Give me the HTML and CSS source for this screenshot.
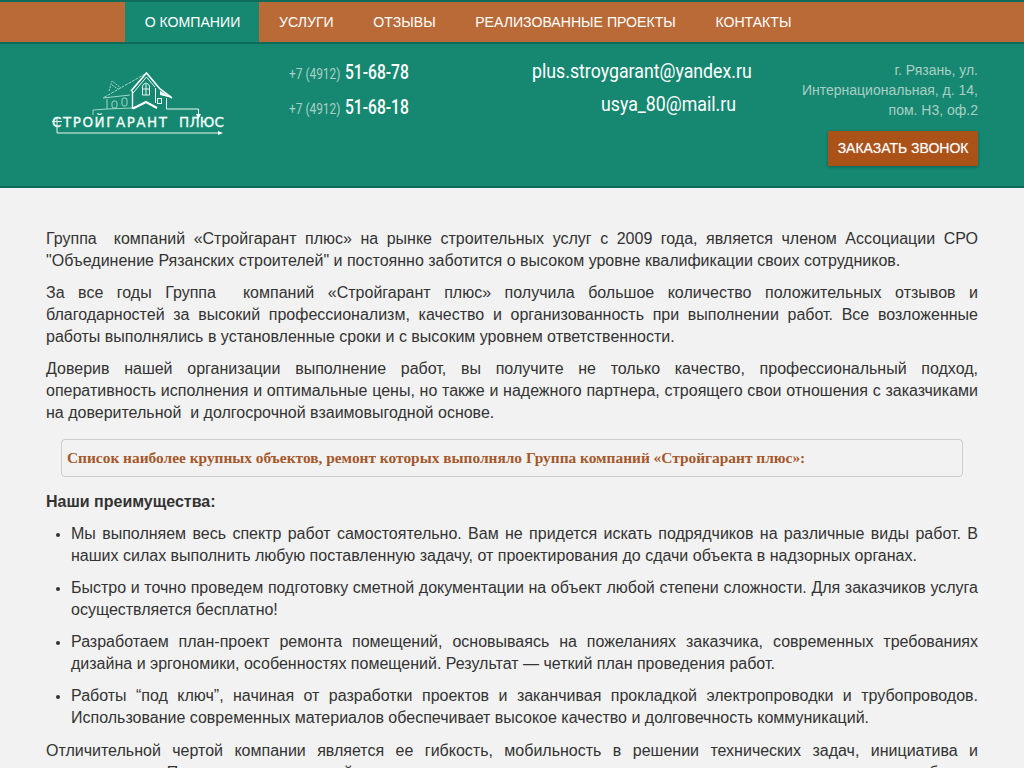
FILE: index.html
```html
<!DOCTYPE html>
<html>
<head>
    <title>Стройгарант плюс</title>
    <link rel="stylesheet" href="styles.css">
</head>
<body>
    <div class="nav-bar">
        <ul class="nav">
            <li class="active"><a href="#">О компании</a></li>
            <li><a href="#">Услуги</a></li>
            <li><a href="#">Отзывы</a></li>
            <li><a href="#">Реализованные проекты</a></li>
            <li><a href="#">Контакты</a></li>
        </ul>
    </div>

    <div class="header">
        <a class="logo" href="#">
            <svg width="180" height="72" viewBox="48 66 180 72" fill="none">
                <!-- back of the house, thin lines -->
                <g class="logo-thin">
                    <path d="M145 74L103 98" stroke-dasharray="3 1"/>
                    <path d="M109 91L112 81L121 88M112 85L118 89" stroke-dasharray="2 1"/>
                    <path d="M103 98L130 95"/>
                    <path d="M93 115V110L107 109L132 108"/>
                    <path d="M107 109V99"/>
                    <rect x="112" y="101" width="5" height="7" rx="2"/>
                    <rect x="122" y="98" width="5" height="8" rx="2"/>
                </g>
                <!-- front of the house -->
                <path d="M131 91L146.500 73L160 89L172 98" stroke="#fff" stroke-width="1.600"/>
                <path d="M133 93L146.500 77L155 87" stroke="#e6f6f0"/>
                <path d="M160 91L172 98L160 95Z" fill="#fff"/>
                <path d="M132.500 91V109" stroke="#fff" stroke-width="1.400"/>
                <path d="M155.500 88V103" stroke="#fff"/>
                <path d="M133 108.500L146 102L157 108" stroke="#fff" stroke-width="2"/>
                <path d="M142.500 95V86Q146 80 149.500 86V95ZM146 84V95M142.500 89H149.500" stroke="#e6f6f0"/>
                <rect x="157.500" y="98.500" width="4" height="5" stroke="#e6f6f0"/>
                <!-- line down to the name -->
                <path d="M166.500 98V109H198.500V115" stroke="#e6f6f0"/>
                <path d="M196 114H201L198.500 119Z" fill="#fff"/>
                <!-- arrow under the name -->
                <path d="M52 121.500H62M57 117V133H218" stroke="#e6f6f0"/>
                <path d="M218 131L223 133L218 135Z" fill="#fff"/>
                <text class="logo-text" y="126.500"><tspan x="52" textLength="115">СТРОЙГАРАНТ</tspan><tspan x="179" textLength="45">ПЛЮС</tspan></text>
            </svg>
        </a>

        <div class="phones">
            <div class="phone"><span class="code">+7 (4912)</span><span class="number">51-68-78</span></div>
            <div class="phone"><span class="code">+7 (4912)</span><span class="number">51-68-18</span></div>
        </div>

        <div class="mails">
            <a href="#">plus.stroygarant@yandex.ru</a>
            <a class="mail-second" href="#">usya_80@mail.ru</a>
        </div>

        <div class="contacts">
            <div class="address">г. Рязань, ул. Интернациональная, д. 14, пом. Н3, оф.2</div>
            <a class="call-btn" href="#">Заказать звонок</a>
        </div>
    </div>

    <div class="container">
        <p>Группа&nbsp; компаний «Стройгарант плюс» на рынке строительных услуг с 2009 года, является членом Ассоциации СРО "Объединение Рязанских строителей" и постоянно заботится о высоком уровне квалификации своих сотрудников.</p>
        <p>За все годы Группа&nbsp; компаний «Стройгарант плюс» получила большое количество положительных отзывов и благодарностей за высокий профессионализм, качество и организованность при выполнении работ. Все возложенные работы выполнялись в установленные сроки и с высоким уровнем ответственности.</p>
        <p>Доверив нашей организации выполнение работ, вы получите не только качество, профессиональный подход, оперативность исполнения и оптимальные цены, но также и надежного партнера, строящего свои отношения с заказчиками на доверительной&nbsp; и долгосрочной взаимовыгодной основе.</p>

        <div class="objects">Список наиболее крупных объектов, ремонт которых выполняло Группа компаний «Стройгарант плюс»:</div>

        <p class="title">Наши преимущества:</p>
        <ul class="list">
            <li>Мы выполняем весь спектр работ самостоятельно. Вам не придется искать подрядчиков на различные виды работ. В наших силах выполнить любую поставленную задачу, от проектирования до сдачи объекта в надзорных органах.</li>
            <li>Быстро и точно проведем подготовку сметной документации на объект любой степени сложности. Для заказчиков услуга осуществляется бесплатно!</li>
            <li>Разработаем план-проект ремонта помещений, основываясь на пожеланиях заказчика, современных требованиях дизайна и эргономики, особенностях помещений. Результат — четкий план проведения работ.</li>
            <li>Работы “под ключ”, начиная от разработки проектов и заканчивая прокладкой электропроводки и трубопроводов. Использование современных материалов обеспечивает высокое качество и долговечность коммуникаций.</li>
        </ul>
        <p>Отличительной чертой компании является ее гибкость, мобильность в решении технических задач, инициатива и оперативность. Поэтому мы для каждой задачи находим оптимальное решение, сроки и стоимость проводимых работ на объекте любого объема.</p>
    </div>
</body>
</html>
```

FILE: styles.css
```css
body {
    margin: 0;
    font-family: "Liberation Sans", Arial, sans-serif;
    font-size: 16px;
    color: #333;
    background-color: #f2f2f2;
}

a {
    color: inherit;
    text-decoration: none;
}

/* Top menu */
.nav-bar {
    background-color: #b96a37;
    border-top: 2px solid #0f6b59;
    border-bottom: 2px solid #0f6b59;
}

.nav {
    display: flex;
    margin: 0;
    padding: 0 0 0 125px;
    list-style: none;
}

.nav a {
    display: block;
    padding: 0 19.8px;
    line-height: 40px;
    font-size: 14.1px;
    color: #fff;
    text-transform: uppercase;
}

.nav .active a {
    padding: 0 19px 0 19.7px;
    background-color: #168871;
}

/* Header */
.header {
    height: 142px;
    display: flex;
    color: #fff;
    background-color: #168871;
    border-bottom: 2px solid #0f6b59;
}

.logo {
    margin: 22px 0 0 48px;
    width: 180px;
    flex-shrink: 0;
}

.logo-thin {
    stroke: #9fd8c5;
}

.logo-text {
    font-family: "DejaVu Sans", sans-serif;
    font-size: 13.5px;
    fill: #f2fbf8;
    stroke: #f2fbf8;
    stroke-width: .3px;
}

.phones {
    width: 243px;
    margin-left: 61px;
    padding-top: 16px;
    flex-shrink: 0;
}

/* no condensed font here, so the numbers are squeezed */
.phone {
    display: flex;
    align-items: baseline;
    height: 35px;
    line-height: 24px;
    white-space: nowrap;
}

.code {
    display: inline-block;
    width: 56px;
    font-family: Roboto, sans-serif;
    font-size: 14px;
    color: #a9cfc4;
    transform: scaleX(.85);
    transform-origin: left;
}

.number {
    display: inline-block;
    font-family: Roboto, sans-serif;
    font-size: 20px;
    font-weight: 500;
    transform: scaleX(.78);
    transform-origin: left;
}

.mails {
    width: 220px;
    padding-top: 14px;
    flex-shrink: 0;
    font-family: Roboto, sans-serif;
    font-size: 20px;
}

.mails a {
    display: block;
    height: 33px;
    line-height: 26px;
    white-space: nowrap;
    transform: scaleX(.887);
    transform-origin: left;
}

.mails .mail-second {
    margin-left: 69px;
}

.contacts {
    width: 180px;
    margin-left: 46px;
    padding-top: 16px;
    text-align: right;
}

.address {
    font-size: 14px;
    line-height: 20px;
    color: #a9cfc4;
}

.call-btn {
    display: inline-block;
    margin-top: 11px;
    padding: 0 9.5px;
    line-height: 35px;
    font-size: 14px;
    color: #fff;
    text-transform: uppercase;
    text-shadow: 0 0 1px rgba(255, 255, 255, .5);
    background-color: #ab5219;
    box-shadow: 0 1px 3px rgba(0, 0, 0, .3);
}

/* Text */
.container {
    padding: 40px 46px 0;
    line-height: 22px;
    text-align: justify;
}

p {
    margin: 0 0 10px;
}

.objects {
    margin: 15px 15px 14px;
    padding: 8px 5px;
    height: 20px;
    line-height: 20px;
    font-family: "Liberation Serif", "Times New Roman", serif;
    font-size: 15.4px;
    font-weight: bold;
    color: #a5572a;
    text-align: left;
    border: 1px solid #ccc;
    border-radius: 4px;
}

.title {
    font-weight: bold;
    margin-bottom: 10px;
}

.list {
    margin: 0 0 11px;
    padding-left: 25px;
}

.list li {
    margin-bottom: 10px;
}

.list li::marker {
    font-size: 13px;
}
```
